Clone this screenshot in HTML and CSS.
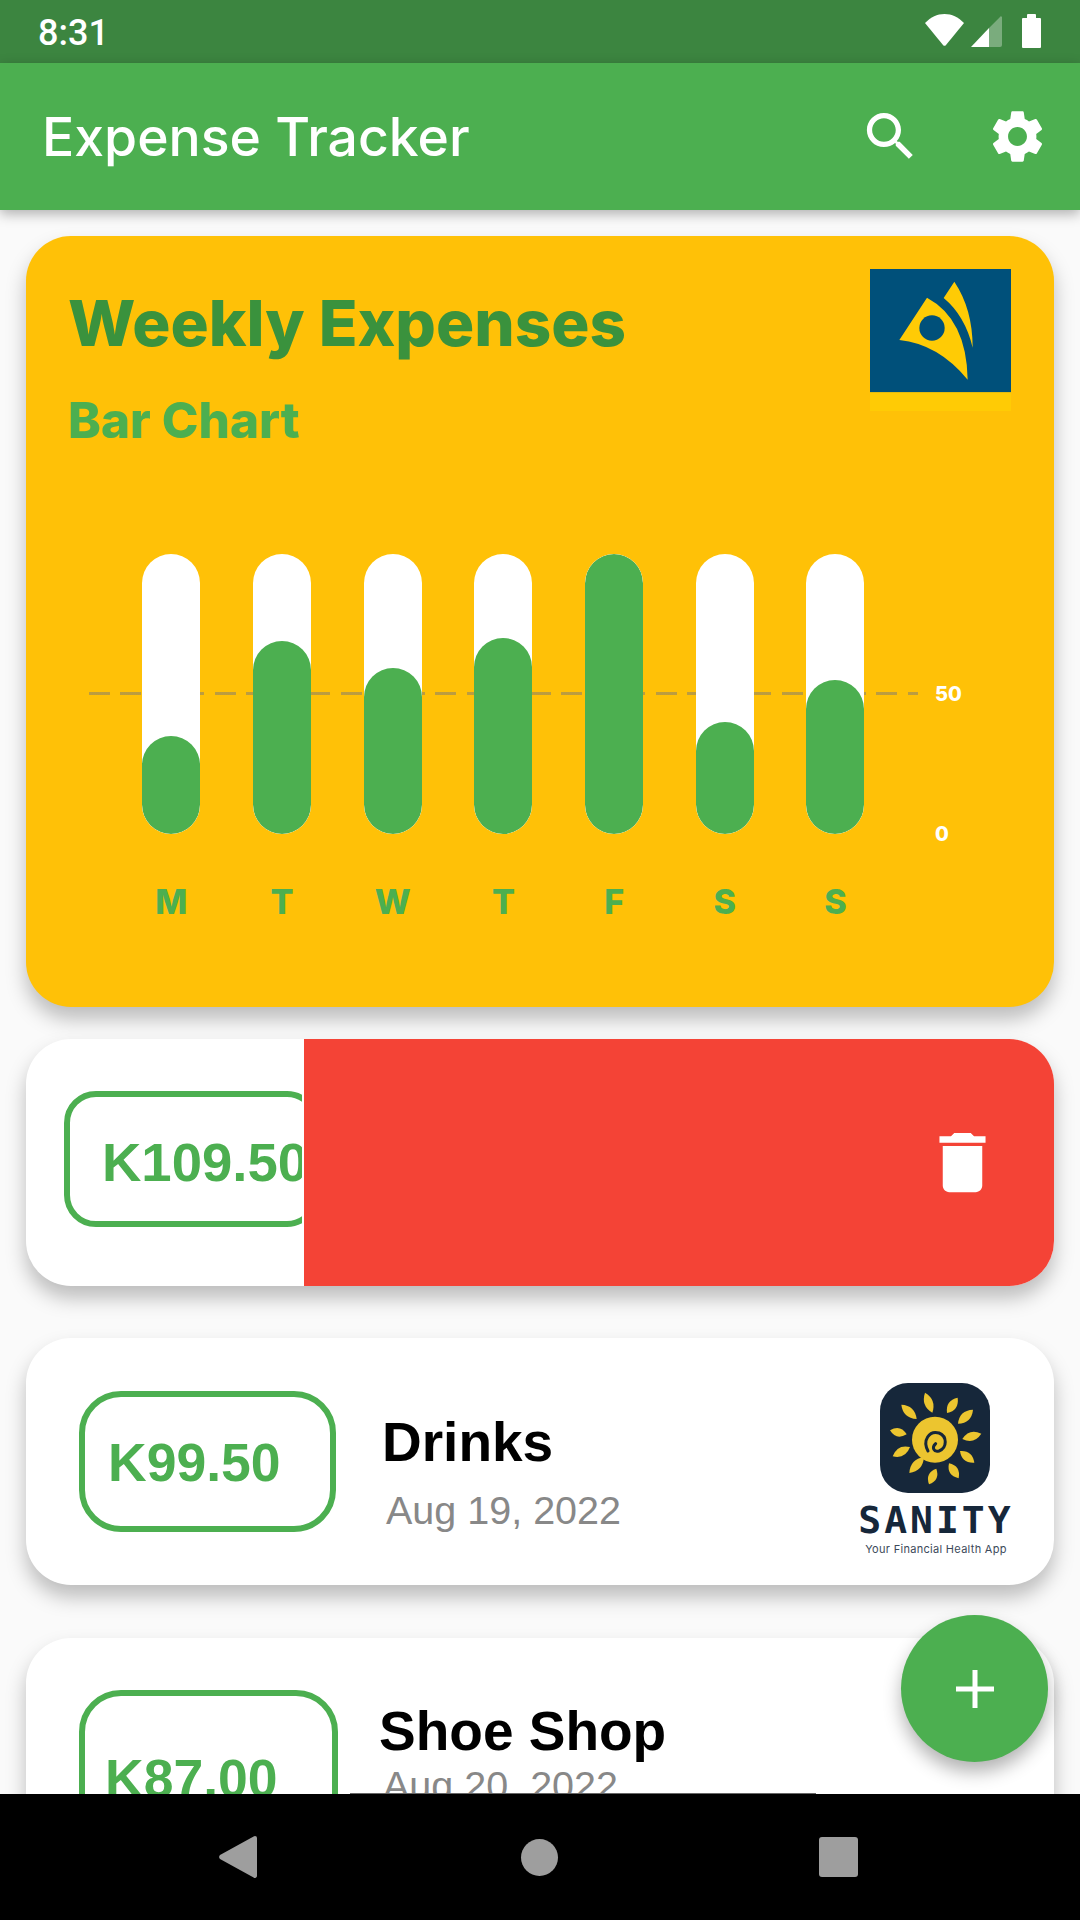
FILE: index.html
```html
<!DOCTYPE html>
<html lang="en">
<head>
<meta charset="utf-8">
<title>Expense Tracker</title>
<link rel="stylesheet" href="styles.css">
</head>
<body>
<div class="app">
  <header class="status-bar">
    <span class="time">8:31</span>
    <div class="status-icons">
      <svg class="wifi" width="41" height="32" viewBox="0 0 41 32"><path fill="#fff" d="M1 9C7 3 13 0 20.5 0S34 3 40 9L22 31a2 2 0 0 1-3 0Z"/></svg>
      <svg class="signal" width="31" height="31" viewBox="0 0 31 31"><path fill="#fff" fill-opacity=".32" d="M31 2v27a2 2 0 0 1-2 2H18V12L29 1a1 1 0 0 1 2 1Z"/><path fill="#fff" d="M18 12L0 31h18Z"/></svg>
      <svg class="battery" width="19" height="34" viewBox="0 0 19 34"><path fill="#fff" d="M5 1a1 1 0 0 1 1-1h7a1 1 0 0 1 1 1v3h4a1 1 0 0 1 1 1v28a1 1 0 0 1-1 1H1a1 1 0 0 1-1-1V5a1 1 0 0 1 1-1h4Z"/></svg>
    </div>
  </header>
  <nav class="app-bar">
    <h1 class="app-title">Expense Tracker</h1>
    <svg class="action" viewBox="0 0 24 24"><path fill="#fff" d="M15.5 14h-.79l-.28-.27C15.41 12.59 16 11.11 16 9.5 16 5.91 13.09 3 9.5 3S3 5.91 3 9.5 5.91 16 9.5 16c1.61 0 3.09-.59 4.23-1.57l.27.28v.79l5 4.99L20.49 19l-4.99-5zm-6 0C7.01 14 5 11.99 5 9.5S7.01 5 9.5 5 14 7.01 14 9.5 11.99 14 9.5 14z"/></svg>
    <svg class="action" viewBox="0 0 24 24"><path fill="#fff" d="M19.14 12.94c.04-.3.06-.61.06-.94 0-.32-.02-.64-.07-.94l2.03-1.58c.18-.14.23-.41.12-.61l-1.92-3.32c-.12-.22-.37-.29-.59-.22l-2.39.96c-.5-.38-1.03-.7-1.62-.94l-.36-2.54c-.04-.24-.24-.41-.48-.41h-3.84c-.24 0-.43.17-.47.41l-.36 2.54c-.59.24-1.13.57-1.62.94l-2.39-.96c-.22-.08-.47 0-.59.22L2.74 8.87c-.12.21-.08.47.12.61l2.03 1.58c-.05.3-.09.63-.09.94s.02.64.07.94l-2.03 1.58c-.18.14-.23.41-.12.61l1.92 3.32c.12.22.37.29.59.22l2.39-.96c.5.38 1.03.7 1.62.94l.36 2.54c.05.24.24.41.48.41h3.84c.24 0 .44-.17.47-.41l.36-2.54c.59-.24 1.13-.56 1.62-.94l2.39.96c.22.08.47 0 .59-.22l1.92-3.32c.12-.22.07-.47-.12-.61l-2.01-1.58zM12 15.6c-1.98 0-3.6-1.62-3.6-3.6s1.62-3.6 3.6-3.6 3.6 1.62 3.6 3.6-1.62 3.6-3.6 3.6z"/></svg>
  </nav>

  <main class="content">
    <section class="chart-card">
      <div class="chart-head">
        <div>
          <h2 class="chart-title">Weekly Expenses</h2>
          <p class="chart-sub">Bar Chart</p>
        </div>
        <svg class="brand" width="141" height="142" viewBox="0 0 423 426">
          <rect width="423" height="370" fill="#00507a"/>
          <rect y="370" width="423" height="56" fill="#ffcb05"/>
          <path fill="#ffcb05" d="M171 86Q290 150 293 332Q205 225 88 213Z"/>
          <circle cx="186" cy="177" r="38" fill="#00507a"/>
          <path fill="#ffcb05" d="M253 38Q308 120 308 236Q285 140 221 87Z"/>
        </svg>
      </div>
      <div class="chart">
        <div class="dash-line"></div>
        <span class="axis-label axis-50">50</span>
        <span class="axis-label axis-0">0</span>
        <div class="day"><div class="track"><div class="fill" style="height:98px"></div></div><span class="day-label">M</span></div>
        <div class="day"><div class="track"><div class="fill" style="height:193px"></div></div><span class="day-label">T</span></div>
        <div class="day"><div class="track"><div class="fill" style="height:166px"></div></div><span class="day-label">W</span></div>
        <div class="day"><div class="track"><div class="fill" style="height:196px"></div></div><span class="day-label">T</span></div>
        <div class="day"><div class="track"><div class="fill" style="height:280px"></div></div><span class="day-label">F</span></div>
        <div class="day"><div class="track"><div class="fill" style="height:112px"></div></div><span class="day-label">S</span></div>
        <div class="day"><div class="track"><div class="fill" style="height:154px"></div></div><span class="day-label">S</span></div>
      </div>
    </section>

    <article class="card swipe-card">
      <div class="swipe-left">
        <div class="swipe-clip">
          <div class="badge badge-swipe"><span class="amount amount-lg">K109.50</span></div>
        </div>
      </div>
      <div class="swipe-delete">
        <svg class="trash" viewBox="0 0 24 24"><path fill="#fff" d="M6 19c0 1.1.9 2 2 2h8c1.1 0 2-.9 2-2V7H6v12zM19 4h-3.5l-1-1h-5l-1 1H5v2h14V4z"/></svg>
      </div>
    </article>

    <article class="card tx-card">
      <div class="badge badge-drinks"><span class="amount">K99.50</span></div>
      <div class="tx-text tx-text-drinks">
        <h3 class="tx-title">Drinks</h3>
        <p class="tx-date">Aug 19, 2022</p>
      </div>
      <div class="sanity">
        <svg class="sanity-icon" width="110" height="110" viewBox="0 0 330 330">
          <rect width="330" height="330" rx="84" fill="#16273a"/>
          <g fill="#ecc52f">
            <path d="M135 29Q122 68 157 89Q170 50 135 29Z"/>
            <path d="M233 44Q196 52 201 90Q238 82 233 44Z"/>
            <path d="M279 80Q238 82 234 122Q275 120 279 80Z"/>
            <path d="M304 152Q268 135 247 168Q282 185 304 152Z"/>
            <path d="M283 239Q277 201 240 204Q245 241 283 239Z"/>
            <path d="M236 286Q243 249 207 241Q199 277 236 286Z"/>
            <path d="M147 304Q181 291 169 257Q135 269 147 304Z"/>
            <path d="M88 270Q129 264 132 222Q91 228 88 270Z"/>
            <path d="M38 220Q76 229 90 192Q52 183 38 220Z"/>
            <path d="M30 142Q49 173 80 154Q61 123 30 142Z"/>
            <path d="M64 65Q69 105 110 108Q105 67 64 65Z"/>
            <ellipse cx="165" cy="170" rx="69" ry="69"/>
          </g>
          <path fill="none" stroke="#16273a" stroke-width="9" stroke-linecap="round" d="M144 204C127 172 147 142 177 150C202 160 202 194 177 204C162 208 154 194 167 182"/>
        </svg>
        <span class="sanity-name">SANITY</span>
        <span class="sanity-tag">Your Financial Health App</span>
      </div>
    </article>

    <article class="card tx-card tx-card-clipped">
      <div class="badge badge-shoe"><span class="amount">K87.00</span></div>
      <div class="tx-text">
        <h3 class="tx-title">Shoe Shop</h3>
        <p class="tx-date tx-date-tight">Aug 20, 2022</p>
      </div>
    </article>

    <div class="scroll-edge"></div>
  </main>

  <button class="fab" type="button" aria-label="Add">
    <svg width="38" height="38" viewBox="0 0 38 38"><path fill="#fff" d="M16.500 0h5v16.500H38v5H21.500V38h-5V21.500H0v-5h16.500Z"/></svg>
  </button>

  <footer class="nav-bar">
    <svg width="38" height="42" viewBox="0 0 38 42"><path fill="#9e9e9e" d="M36 0a2 2 0 0 1 2 2v38a2 2 0 0 1-3.400 1.400L1 23a3 3 0 0 1 0-4L34.600.600A2 2 0 0 1 36 0Z"/></svg>
    <span class="nav-circle"></span>
    <span class="nav-square"></span>
  </footer>
</div>
</body>
</html>
```

FILE: styles.css
```css
* { box-sizing: border-box; }
html, body { margin: 0; padding: 0; }
body { width: 1080px; height: 1920px; overflow: hidden; font-family: "Liberation Sans", Arial, sans-serif; background: #fafafa; }
h1, h2, h3, p { margin: 0; }

.app { position: relative; width: 1080px; height: 1920px; display: flex; flex-direction: column; overflow: hidden; }

.status-bar { height: 63px; flex: none; background: #3c8540; display: flex; align-items: center; justify-content: space-between; padding: 0 39px 0 38px; color: #fff; }
.time { font-family: Roboto, sans-serif; font-weight: 500; font-size: 36px; line-height: 1; position: relative; top: 1px; }
.status-icons { display: flex; align-items: flex-start; padding-bottom: 1px; }
.wifi { display: block; }
.signal { display: block; margin: 2px 20px 0 6px; }
.battery { display: block; }

.app-bar { position: relative; z-index: 2; height: 147px; flex: none; background: #4caf50; display: flex; align-items: center; gap: 64px; padding: 0 31px 0 42px; box-shadow: 0 4px 12px rgba(0,0,0,.3); }
.app-title { margin-right: auto; color: #fff; font-family: Inter, sans-serif; font-weight: 500; font-size: 53.500px; line-height: 1; }
.action { display: block; width: 63px; height: 63px; }

.content { position: relative; flex: 1; min-height: 0; overflow: hidden; padding: 26px 26px 0; background: #fafafa; }

.chart-card { height: 771px; background: #ffc107; border-radius: 45px; padding: 33px 43px 0; margin-bottom: 32px; box-shadow: 0 12px 20px rgba(0,0,0,.25); }
.chart-head { display: flex; justify-content: space-between; align-items: flex-start; height: 285px; }
.chart-title { color: #3a923d; font-family: Inter, sans-serif; font-weight: 800; font-size: 63.700px; line-height: 72px; margin: 18px 0 0 -1px; }
.chart-sub { color: #4caf50; font-family: Inter, sans-serif; font-weight: 800; font-size: 49.500px; line-height: 52px; margin: 35px 0 0 -1px; }
.brand { display: block; }

.chart { position: relative; display: flex; padding-left: 47px; }
.dash-line { position: absolute; left: 20px; top: 138px; width: 829px; height: 3px; background: repeating-linear-gradient(90deg, rgba(120,120,120,.5) 0 21px, transparent 21px 31.500px); }
.axis-label { position: absolute; left: 866px; color: #fff; font-family: Inter, sans-serif; font-weight: 800; font-size: 20px; line-height: 24px; }
.axis-50 { top: 128px; }
.axis-0 { top: 268px; }
.day { position: relative; width: 110.700px; display: flex; flex-direction: column; align-items: center; }
.track { width: 58px; height: 280px; border-radius: 29px; background: #fff; display: flex; flex-direction: column; justify-content: flex-end; overflow: hidden; }
.fill { width: 58px; border-radius: 29px; background: #4caf50; }
.day-label { margin-top: 48px; color: #4caf50; font-family: Inter, sans-serif; font-weight: 800; font-size: 34px; line-height: 40px; }

.card { background: #fff; border-radius: 45px; box-shadow: 0 12px 20px rgba(0,0,0,.25); }
.badge { flex: none; display: flex; align-items: center; border: 6px solid #4caf50; color: #4caf50; }
.amount { font-weight: 700; font-size: 53.500px; line-height: 60px; white-space: nowrap; }
.amount-lg { font-size: 54.500px; }

.swipe-card { height: 247px; margin-bottom: 52px; display: flex; overflow: hidden; }
.swipe-left { width: 278px; flex: none; padding: 0 2px 7px 38px; display: flex; align-items: center; }
.swipe-clip { width: 238px; overflow: hidden; }
.badge-swipe { width: 255px; height: 136px; border-radius: 32px; padding: 7px 0 0 32px; }
.swipe-delete { flex: 1; background: #f44336; display: flex; align-items: center; justify-content: flex-end; padding-right: 52px; }
.trash { display: block; width: 79px; height: 79px; }

.tx-card { height: 247px; margin-bottom: 53px; display: flex; align-items: center; padding-left: 53px; }
.badge-drinks { width: 257px; height: 141px; border-radius: 42px; padding: 2px 0 0 23px; }
.badge-shoe { width: 259px; height: 178px; border-radius: 42px; padding-left: 20px; }
.tx-text { flex: 1; margin-left: 46px; }
.tx-text-drinks { padding-top: 20px; }
.tx-title { color: #000; font-weight: 700; font-size: 55px; line-height: 62px; }
.tx-date { color: #888; font-size: 39.500px; line-height: 46px; margin: 14px 0 0 4px; }
.tx-date-tight { margin: 0 0 0 4px; }

.tx-card-clipped { align-items: flex-start; padding-top: 52px; margin-bottom: 0; }
.tx-card-clipped .tx-text { margin-left: 41px; padding-top: 10px; }

.sanity { width: 156px; margin: 16px 40px 0 0; flex: none; display: flex; flex-direction: column; align-items: center; color: #16273a; }
.sanity-icon { display: block; position: relative; left: -1px; }
.sanity-name { font-family: "DejaVu Sans Mono", monospace; font-weight: 700; font-size: 38px; line-height: 40px; margin-top: 7px; letter-spacing: 3px; }
.sanity-tag { font-family: Inter, sans-serif; font-size: 11px; line-height: 14px; letter-spacing: .3px; margin-top: 2px; white-space: nowrap; color: #3c4a5a; }

.scroll-edge { position: absolute; left: 350px; bottom: 0; width: 466px; height: 1px; background: #666; }

.fab { position: absolute; left: 901px; top: 1615px; width: 147px; height: 147px; border: 0; padding: 0; border-radius: 50%; background: #4caf50; display: flex; align-items: center; justify-content: center; box-shadow: 0 10px 18px rgba(0,0,0,.3); }
.fab svg { display: block; }

.nav-bar { height: 126px; flex: none; background: #000; display: flex; align-items: center; justify-content: space-between; padding: 0 222px 0 219px; position: relative; z-index: 2; }
.nav-bar svg { display: block; }
.nav-circle { width: 37px; height: 37px; border-radius: 50%; background: #9e9e9e; position: relative; left: 1px; }
.nav-square { width: 39px; height: 40px; border-radius: 3px; background: #9e9e9e; }
```
